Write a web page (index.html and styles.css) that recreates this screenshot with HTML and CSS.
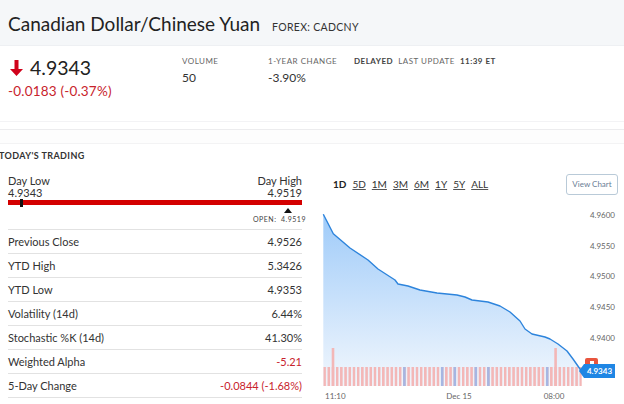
FILE: index.html
```html
<!DOCTYPE html>
<html lang="en">
<head>
    <meta charset="UTF-8">
    <meta name="viewport" content="width=device-width, initial-scale=1.0">
    <title>Canadian Dollar/Chinese Yuan - CADCNY</title>
    <link rel="stylesheet" href="styles.css">
</head>
<body>
    <header class="title-bar">
        <h1>Canadian Dollar/Chinese Yuan</h1>
        <span class="exchange">FOREX: CADCNY</span>
    </header>

    <section class="quote">
        <div class="price-block">
            <div class="price">
                <svg class="arrow" width="13" height="16" viewBox="0 0 13 16">
                    <path d="M4.5 0 H8.5 V9 H13 L6.5 16 L0 9 H4.5 Z" fill="#d0021b"/>
                </svg>
                <span>4.9343</span>
            </div>
            <div class="change down">-0.0183 (-0.37%)</div>
        </div>
        <div class="stat">
            <div class="label">Volume</div>
            <div class="value">50</div>
        </div>
        <div class="stat">
            <div class="label">1-Year Change</div>
            <div class="value">-3.90%</div>
        </div>
        <div class="status">
            <span class="strong">Delayed</span>
            <span>Last Update</span>
            <span class="strong">11:39 ET</span>
        </div>
    </section>
    <div class="rule-gap"></div>
    <div class="rule-gap wide"></div>

    <section class="trading">
        <div class="left">
            <h2>Today's Trading</h2>
            <div class="range-head">
                <span>Day Low</span>
                <span>Day High</span>
            </div>
            <div class="range-head">
                <span>4.9343</span>
                <span>4.9519</span>
            </div>
            <div class="range-bar">
                <div class="marker"></div>
            </div>
            <div class="open-row">
                <div class="open-mark">
                    <span class="tri"></span>
                    <span class="open-text">OPEN:&nbsp; 4.9519</span>
                </div>
            </div>
            <div class="stats-table">
                <div class="row"><span>Previous Close</span><span>4.9526</span></div>
                <div class="row"><span>YTD High</span><span>5.3426</span></div>
                <div class="row"><span>YTD Low</span><span>4.9353</span></div>
                <div class="row"><span>Volatility (14d)</span><span>6.44%</span></div>
                <div class="row"><span>Stochastic %K (14d)</span><span>41.30%</span></div>
                <div class="row"><span>Weighted Alpha</span><span class="down">-5.21</span></div>
                <div class="row"><span>5-Day Change</span><span class="down">-0.0844 (-1.68%)</span></div>
            </div>
        </div>

        <div class="chart-col">
            <div class="chart-top">
                <div class="periods">
                    <a class="active">1D</a>
                    <a href="#">5D</a>
                    <a href="#">1M</a>
                    <a href="#">3M</a>
                    <a href="#">6M</a>
                    <a href="#">1Y</a>
                    <a href="#">5Y</a>
                    <a href="#">ALL</a>
                </div>
                <button class="view-btn">View Chart</button>
            </div>
            <svg class="chart" width="314" height="199" viewBox="0 0 314 199">
                <defs>
                    <linearGradient id="area" x1="0" y1="0" x2="0" y2="1">
                        <stop offset="0" stop-color="#9fcbf9"/>
                        <stop offset="1" stop-color="#f2f7fd"/>
                    </linearGradient>
                    <pattern id="vol" patternUnits="userSpaceOnUse" x="13.3" y="161" width="4.2" height="19">
                        <rect x="0" y="0" width="2.6" height="19" fill="#f3b7b7"/>
                    </pattern>
                </defs>

                <!-- price area -->
                <path d="M13.3,8.3 L23.3,27.7 L40,42 L58,54 L68,63 L85,74 L88,78 L98,80 L110,84 L127,87 L147,89 L155,91 L162,94 L178,96 L190,100 L200,106 L210,115 L215,123 L222,128 L235,131 L240,133 L248,138 L257,145 L263,153 L270.7,164 L270.7,180 L13.3,180 Z" fill="url(#area)"/>

                <!-- volume -->
                <rect x="13.3" y="161" width="258.4" height="19" fill="url(#vol)"/>
                <rect x="21.7" y="142" width="2.6" height="38" fill="#f3b7b7"/>
                <rect x="244.3" y="142" width="2.6" height="38" fill="#f3b7b7"/>
                <g fill="#a6b6e2">
                    <rect x="93.1" y="161" width="2.6" height="19"/>
                    <rect x="130.9" y="161" width="2.6" height="19"/>
                    <rect x="143.5" y="161" width="2.6" height="19"/>
                    <rect x="164.5" y="161" width="2.6" height="19"/>
                    <rect x="177.1" y="161" width="2.6" height="19"/>
                    <rect x="235.9" y="161" width="2.6" height="19"/>
                </g>

                <path d="M13.3,8.3 L23.3,27.7 L40,42 L58,54 L68,63 L85,74 L88,78 L98,80 L110,84 L127,87 L147,89 L155,91 L162,94 L178,96 L190,100 L200,106 L210,115 L215,123 L222,128 L235,131 L240,133 L248,138 L257,145 L263,153 L270.7,164" fill="none" stroke="#2d84dc" stroke-width="1.4" stroke-linejoin="round"/>

                <!-- y axis -->
                <g class="axis" text-anchor="end">
                    <text x="305" y="12">4.9600</text>
                    <text x="305" y="43">4.9550</text>
                    <text x="305" y="73">4.9500</text>
                    <text x="305" y="104">4.9450</text>
                    <text x="305" y="135">4.9400</text>
                </g>

                <!-- last price tag -->
                <rect x="275" y="152" width="13" height="10" rx="2" fill="#e8553e"/>
                <rect x="280" y="155" width="4" height="3" fill="#fff"/>
                <path d="M269,165 L274,158 H305 V172 H274 Z" fill="#1f86e4"/>
                <text class="tag" x="289.5" y="168" text-anchor="middle">4.9343</text>

                <!-- x axis -->
                <g class="axis">
                    <text x="15" y="193">11:10</text>
                    <text x="149" y="193" text-anchor="middle">Dec 15</text>
                    <text x="244" y="193" text-anchor="middle">08:00</text>
                </g>
            </svg>
        </div>
    </section>
</body>
</html>
```

FILE: styles.css
```css
body {
    font-family: Lato, "Open Sans", sans-serif;
    margin: 0;
    padding: 0;
    width: 624px;
    height: 404px;
    overflow: hidden;
    background-color: #fff;
    color: #333;
}
.title-bar {
    height: 46px;
    box-sizing: border-box;
    display: flex;
    align-items: baseline;
    padding: 12px 8px 0;
    background-color: #f5f7f9;
    border-bottom: 1px solid #eef0f3;
}
.title-bar h1 {
    margin: 0;
    font-size: 19px;
    font-weight: 400;
    color: #222;
}
.exchange {
    margin-left: 12px;
    font-size: 10.5px;
    letter-spacing: 0.3px;
    color: #333;
}
.quote {
    display: flex;
    height: 76px;
    box-sizing: border-box;
    padding: 10px 8px 0;
    border-bottom: 1px solid #f3f3f5;
}
.price-block {
    width: 174px;
}
.price {
    display: flex;
    align-items: center;
    gap: 7px;
    font-size: 19.5px;
    color: #222;
    padding-left: 2px;
}
.change {
    margin-top: 4px;
    font-size: 13.5px;
    letter-spacing: 0.2px;
}
.down {
    color: #c8232c;
}
.stat {
    width: 86px;
}
.label,
.status {
    font-size: 8px;
    letter-spacing: 0.5px;
    text-transform: uppercase;
    color: #666;
    margin-top: 0;
}
.stat .value {
    margin-top: 4px;
    font-size: 12px;
    color: #333;
}
.status {
    display: flex;
    gap: 5px;
    height: 10px;
}
.status .strong {
    font-weight: 700;
    color: #444;
}
.rule-gap {
    height: 7px;
    border-bottom: 1px solid #ececee;
}
.rule-gap.wide {
    height: 13px;
    border-bottom-color: #f3f3f4;
    background-color: #fdfdfd;
}
.trading {
    display: flex;
}
.left {
    width: 294px;
    margin-left: 8px;
}
.left h2 {
    margin: 6px 0 0 -9px;
    font-size: 9px;
    line-height: 12px;
    font-weight: 700;
    letter-spacing: 0.4px;
    text-transform: uppercase;
    color: #333;
}
.range-head {
    display: flex;
    justify-content: space-between;
    font-size: 11px;
    line-height: 12px;
}
.range-head:first-of-type {
    margin-top: 13px;
}
.range-bar {
    position: relative;
    height: 5px;
    margin-top: 1px;
    background-color: #d40000;
}
.marker {
    position: absolute;
    left: 12px;
    top: -1px;
    width: 3px;
    height: 8px;
    background-color: #111;
}
.open-row {
    display: flex;
    justify-content: flex-end;
    height: 24px;
}
.open-mark {
    display: flex;
    flex-direction: column;
    align-items: flex-start;
    margin-right: -22px;
    width: 46px;
}
.tri {
    margin: 3px 0 0 -26px;
    align-self: center;
    width: 0;
    height: 0;
    border-left: 4px solid transparent;
    border-right: 4px solid transparent;
    border-bottom: 5px solid #111;
}
.open-text {
    margin-left: -25px;
    font-size: 7px;
    letter-spacing: 0.5px;
    white-space: nowrap;
    color: #444;
    margin-top: 2px;
}
.stats-table {
    border-top: 1px solid #e2e2e2;
}
.row {
    display: flex;
    justify-content: space-between;
    align-items: center;
    height: 24px;
    box-sizing: border-box;
    border-bottom: 1px solid #e2e2e2;
    font-size: 11px;
}
.chart-col {
    flex: 1;
    margin-left: 8px;
}
.chart-top {
    display: flex;
    justify-content: space-between;
    align-items: center;
    margin-top: 30px;
    height: 20px;
    padding: 0 6px 0 23px;
}
.periods {
    display: flex;
    gap: 6px;
}
.periods a {
    font-size: 10px;
    color: #333;
    text-decoration: underline;
    text-decoration-color: #555;
}
.periods a.active {
    font-weight: 700;
    text-decoration: none;
    color: #222;
}
.view-btn {
    width: 52px;
    height: 21px;
    padding: 0;
    border: 1px solid #b9cad8;
    border-radius: 3px;
    background-color: #fff;
    font-family: Lato, sans-serif;
    font-size: 8px;
    color: #6a7d95;
}
.chart {
    display: block;
    margin-top: 12px;
}
.axis text {
    font-family: Lato, sans-serif;
    font-size: 8px;
    fill: #666;
}
.chart .tag {
    font-family: Lato, sans-serif;
    font-size: 8px;
    font-weight: 700;
    fill: #fff;
}
```
